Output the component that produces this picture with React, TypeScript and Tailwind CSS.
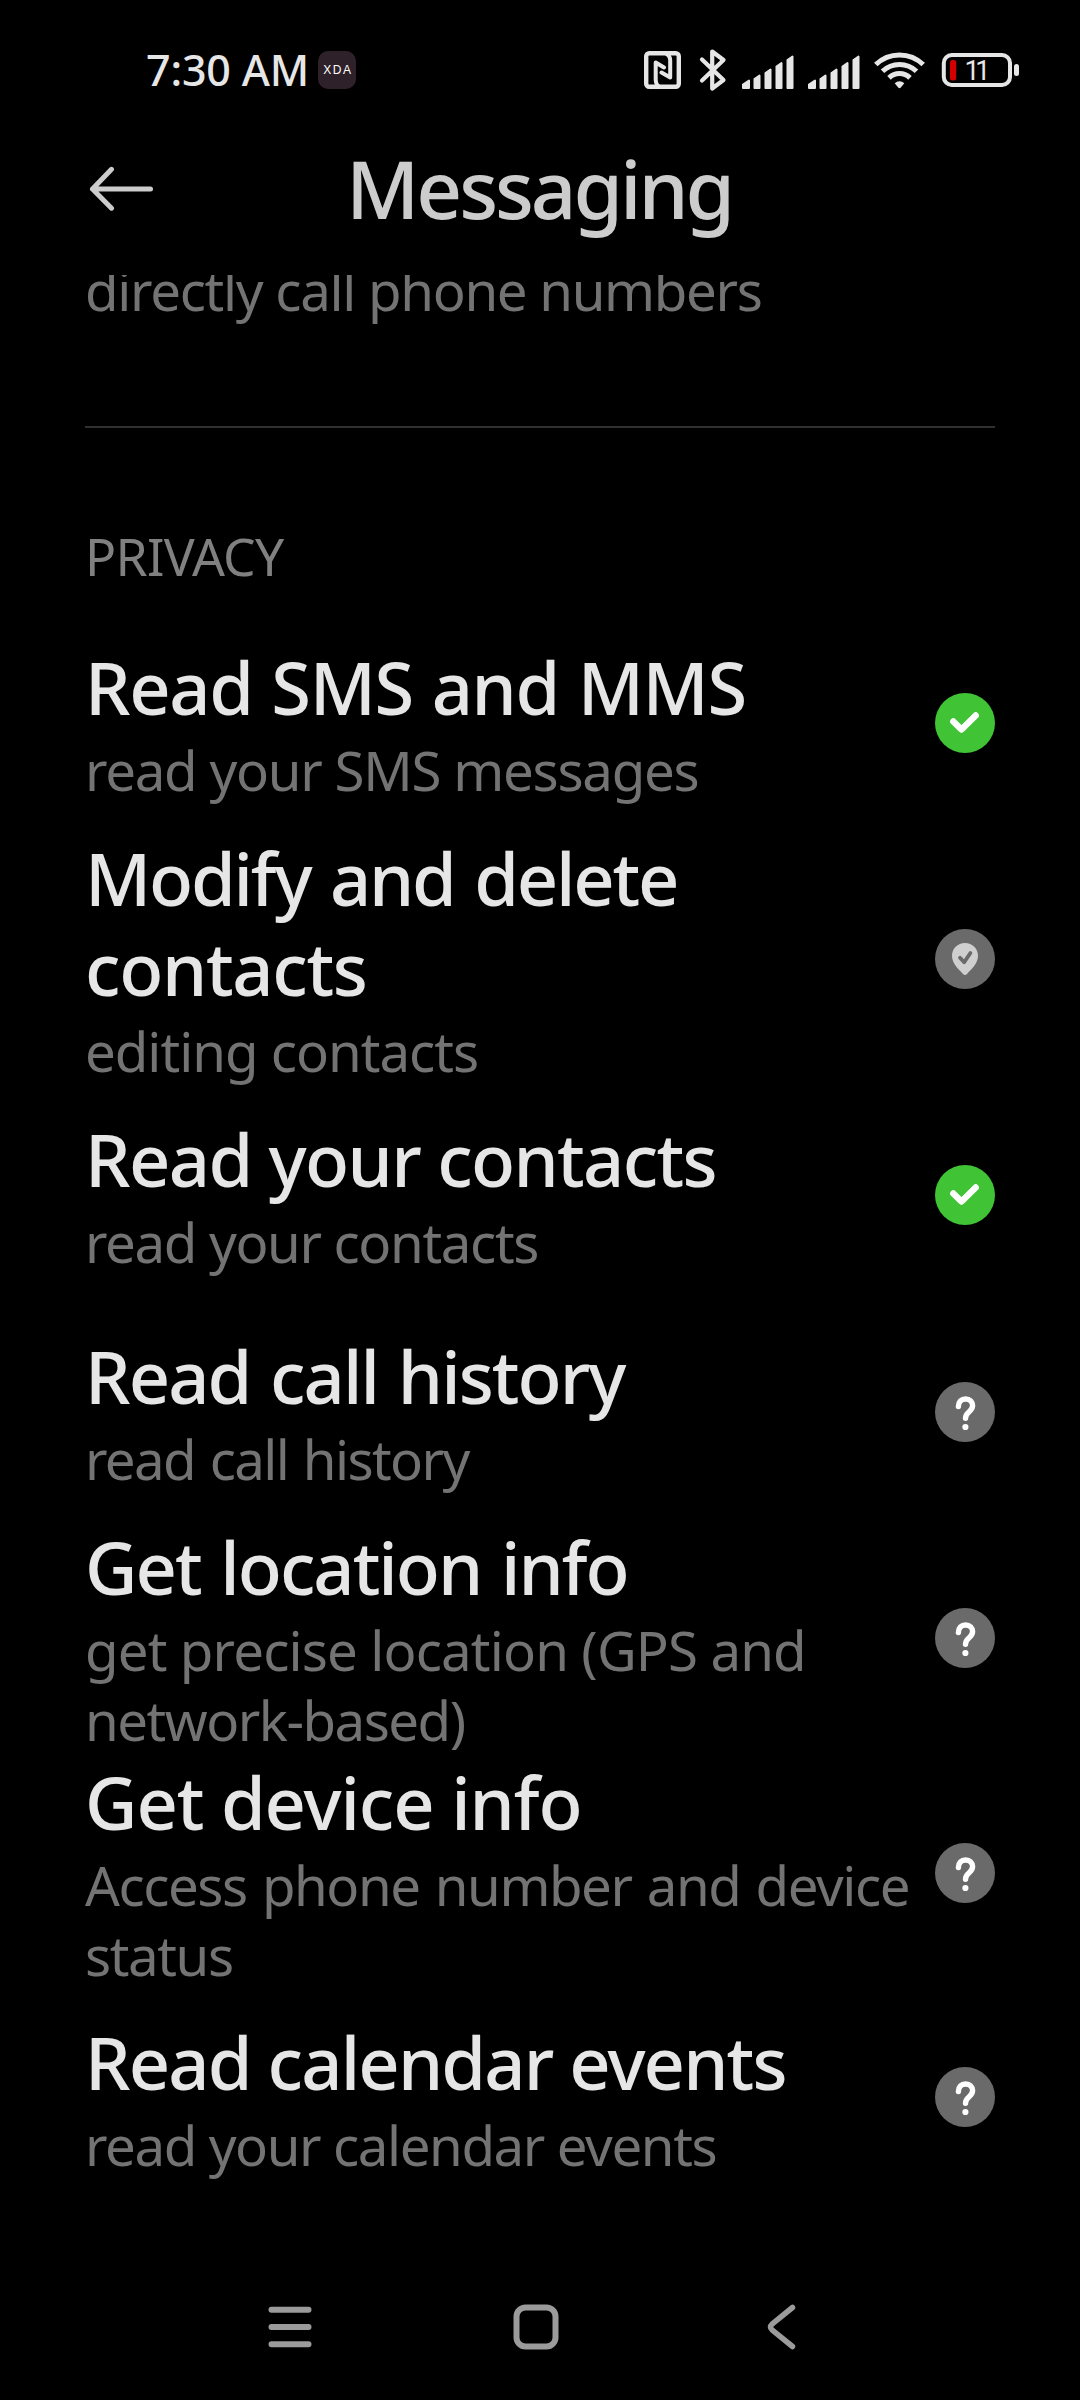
type Status = "allowed" | "system" | "ask";

type Line = { text: string; tracking: string };

type Permission = {
  title: Line[];
  summary: Line[];
  status: Status;
  height?: string;
};

const permissions: Permission[] = [
  {
    title: [{ text: "Read SMS and MMS", tracking: "tracking-[-1.4px] [word-spacing:1.5px]" }],
    summary: [{ text: "read your SMS messages", tracking: "tracking-[-1.25px]" }],
    status: "allowed",
  },
  {
    title: [
      { text: "Modify and delete", tracking: "tracking-[-2.2px] [word-spacing:3px]" },
      { text: "contacts", tracking: "tracking-[-1.3px]" },
    ],
    summary: [{ text: "editing contacts", tracking: "tracking-[-1px]" }],
    status: "system",
  },
  {
    title: [{ text: "Read your contacts", tracking: "tracking-[-1.65px]" }],
    summary: [{ text: "read your contacts", tracking: "tracking-[-1.35px]" }],
    status: "allowed",
  },
  {
    title: [{ text: "Read call history", tracking: "tracking-[-1.95px] [word-spacing:3px]" }],
    summary: [{ text: "read call history", tracking: "tracking-[-1.6px] [word-spacing:2px]" }],
    status: "ask",
  },
  {
    title: [{ text: "Get location info", tracking: "tracking-[-2px] [word-spacing:3px]" }],
    summary: [
      { text: "get precise location (GPS and", tracking: "tracking-[-0.85px]" },
      { text: "network-based)", tracking: "tracking-[-1.5px]" },
    ],
    status: "ask",
  },
  {
    title: [{ text: "Get device info", tracking: "tracking-[-1.1px]" }],
    summary: [
      { text: "Access phone number and device", tracking: "tracking-[-1.45px] [word-spacing:2.500px]" },
      { text: "status", tracking: "tracking-[-1.4px]" },
    ],
    status: "ask",
  },
  {
    title: [{ text: "Read calendar events", tracking: "tracking-[-1.85px]" }],
    summary: [{ text: "read your calendar events", tracking: "tracking-[-1.4px]" }],
    status: "ask",
    height: "min-h-[214px]",
  },
];

function StatusIcon({ status }: { status: Status }) {
  return (
    <svg className="h-[60px] w-[60px] shrink-0" viewBox="0 0 60 60" fill="none" strokeLinecap="round" strokeLinejoin="round">
      <circle cx="30" cy="30" r="30" fill={status === "allowed" ? "#40c335" : "#6a6a6a"} />
      {status === "allowed" && <path d="M18.3 28.4l8.2 8.2 14.2-14.1" stroke="#fff" strokeWidth="6.4" />}
      {status === "system" && (
        <>
          <path d="M30 14c7.4 0 13 5.6 13 12.8 0 7.6-6 13-11.2 18.4-1.1 1.1-2.5 1.1-3.6 0C23 39.8 17 34.4 17 26.8 17 19.6 22.6 14 30 14z" fill="#cfcfcf" />
          <path d="M25 28.8l4.2 4.4 6.2-9.2" stroke="#6a6a6a" strokeWidth="3.8" />
        </>
      )}
      {status === "ask" && (
        <>
          <path d="M23.4 24.6c0-4.8 3-7.6 7.2-7.6 4.3 0 7 2.9 7 6.6 0 6.3-7.1 5.9-7.1 12.6" stroke="#fff" strokeWidth="5.4" />
          <circle cx="30.4" cy="45" r="3.1" fill="#fff" />
        </>
      )}
    </svg>
  );
}

function SignalIcon() {
  return (
    <svg className="h-[36px] w-[53px]" viewBox="0 0 53 36" fill="#e6e6e6" stroke="#e6e6e6" strokeWidth="2" strokeLinejoin="round">
      <path d="M1 30.5l6-4V34H1zM12.5 25l5-3.5V34h-5zM23.5 19l5-3.5V34h-5zM34.5 12.5l5-3.5V34h-5zM45.500 6l5-3.5V34h-5z" />
    </svg>
  );
}

function StatusBar() {
  return (
    <div className="flex h-[140px] items-center pr-[60px] pl-[146px] text-[#e6e6e6]">
      <span className="pb-[2px] text-[43px] leading-none font-medium tracking-[-0.2px]">7:30 AM</span>
      <span className="ml-[9px] flex h-[38px] w-[38px] items-center justify-center rounded-[10px] bg-[#2e2129] pl-[2px] font-['Liberation_Sans'] text-[12px] leading-none tracking-[1.6px] text-white">
        XDA
      </span>

      <div className="ml-auto flex items-center">
        {/* NFC */}
        <svg className="h-[38px] w-[37px]" viewBox="0 0 37 38" fill="none" stroke="#e6e6e6" strokeLinecap="round" strokeLinejoin="round">
          <rect x="2.2" y="2.2" width="32.6" height="33.6" rx="3" strokeWidth="4.4" />
          <path d="M15 35.5c-2.6-1.5-3.3-3.5-3.3-7V11.5L20 16.5" strokeWidth="4" />
          <path d="M22 2.5c2.8 1.5 4.2 3.5 4.2 7v17L17.5 21.5" strokeWidth="4" />
        </svg>
        {/* Bluetooth */}
        <svg className="ml-[18px] h-[44px] w-[28px]" viewBox="0 0 28 44" fill="none" stroke="#e6e6e6" strokeWidth="4.2" strokeLinecap="round" strokeLinejoin="round">
          <path d="M3 11.5l21.500 20.5L13.2 40.5v-37L24.5 12 3 32.5" />
        </svg>
        <div className="ml-[15px] flex gap-[13px] pt-[3px]">
          <SignalIcon />
          <SignalIcon />
        </div>
        {/* Wi-Fi */}
        <svg className="ml-[13px] h-[38px] w-[51px]" viewBox="0 0 51 38" fill="none" stroke="#e6e6e6" strokeWidth="5">
          <path d="M1.8 13.5a34 34 0 0 1 47.4 0" />
          <path d="M8.5 20.3a24.5 24.5 0 0 1 34 0" />
          <path d="M15 26.9a15 15 0 0 1 21 0" />
          <path d="M20.7 32.2a7 7 0 0 1 9.6 0l-3.5 4.3q-1.3 1.3-2.6 0z" fill="#e6e6e6" stroke="none" />
        </svg>
        <svg className="ml-[16px] h-[34px] w-[79px]" viewBox="0 0 79 34">
          <rect x="2.8" y="2" width="66.2" height="30" rx="8" fill="none" stroke="#e6e6e6" strokeWidth="4" />
          <rect x="9" y="7" width="6.2" height="20.5" rx="2.5" fill="#d40000" />
          <text x="23.5" y="27" fill="#e6e6e6" className="font-['Roboto'] text-[27px] tracking-[-4.3px]">
            11
          </text>
          <rect x="73" y="11" width="5" height="12" rx="2.5" fill="#e6e6e6" />
        </svg>
      </div>
    </div>
  );
}

function NavBar() {
  return (
    <nav className="flex items-center pt-[99px] pl-[267px]">
      <svg className="h-[48px] w-[46px]" viewBox="0 0 46 48" stroke="#9b9b9b" strokeWidth="6" strokeLinecap="round">
        <path d="M4.500 6.800h37M4.500 24h37M4.500 41.200h37" />
      </svg>
      <svg className="ml-[199px] h-[48px] w-[48px]" viewBox="0 0 48 48" fill="none" stroke="#9b9b9b" strokeWidth="6">
        <rect x="4.5" y="4.5" width="39" height="39" rx="9" />
      </svg>
      <svg className="ml-[206px] h-[48px] w-[32px]" viewBox="0 0 32 48" fill="none" stroke="#9b9b9b" strokeWidth="5.5" strokeLinecap="round" strokeLinejoin="round">
        <path d="M26.5 4.5L6 21.2q-3 2.8 0 5.6L26.5 43.5" />
      </svg>
    </nav>
  );
}

export default function App() {
  return (
    <div className="flex h-[2400px] w-[1080px] flex-col overflow-hidden bg-black font-['Noto_Sans',sans-serif]">
      <StatusBar />

      <header className="mb-[38px] flex h-[97px] items-center pl-[89px]">
        <svg className="h-[46px] w-[66px]" viewBox="0 0 66 46" fill="none" stroke="#cccccc" strokeWidth="5" strokeLinecap="round" strokeLinejoin="round">
          <path d="M61.500 23H3.500M22.500 3.300L3.500 23l19 19.200" />
        </svg>
        <h1 className="ml-[191px] pb-[2px] text-[80px] leading-[97px] font-medium tracking-[-3.1px] text-[#cccccc]">Messaging</h1>
      </header>

      <main className="overflow-hidden px-[85px]">
        {/* Row scrolled halfway under the header */}
        <p className="-mt-[20px] text-[54.6px] leading-[70px] tracking-[-1.3px] whitespace-nowrap text-[#737373]">
          directly call phone numbers
        </p>
        <div className="mt-[101px] h-[2px] bg-[#303030]" />

        <h2 className="mt-[93px] text-[51.6px] leading-[70px] tracking-[-0.7px] text-[#808080]">PRIVACY</h2>

        <ul className="mt-[23px]">
          {permissions.map((item) => (
            <li
              key={item.title[0].text}
              className={`flex items-center justify-between ${item.height ?? "min-h-[217px]"}`}
            >
              <div className="flex flex-col gap-[3px] pt-[2px] whitespace-nowrap">
                <h3 className="text-[72.2px] leading-[90px] font-medium text-[#e6e6e6]">
                  {item.title.map((line) => (
                    <span key={line.text} className={`block ${line.tracking}`}>{line.text}</span>
                  ))}
                </h3>
                <p className="text-[54.6px] leading-[70px] text-[#737373]">
                  {item.summary.map((line) => (
                    <span key={line.text} className={`block ${line.tracking}`}>{line.text}</span>
                  ))}
                </p>
              </div>
              <StatusIcon status={item.status} />
            </li>
          ))}
        </ul>
      </main>

      <NavBar />
    </div>
  );
}
